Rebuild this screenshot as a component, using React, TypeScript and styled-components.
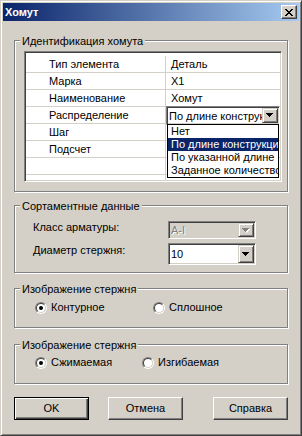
import React from 'react';
import styled, { createGlobalStyle } from 'styled-components';

const Global = createGlobalStyle`
  html, body { margin: 0; padding: 0; background: #D4D0C8; }
  body { font-family: "Liberation Sans", Arial, sans-serif; font-size: 11px; color: #000; }
  * { box-sizing: border-box; }
`;

const Window = styled.div`
  width: 302px;
  height: 436px;
  background: #D4D0C8;
  border: 1px solid;
  border-color: #D4D0C8 #404040 #404040 #D4D0C8;
  box-shadow: inset 1px 1px 0 #fff, inset -1px -1px 0 #808080;
  padding: 2px;
  display: flex;
  flex-direction: column;
`;

const TitleBar = styled.div`
  height: 18px;
  flex: none;
  display: flex;
  align-items: center;
  justify-content: space-between;
  padding: 0 2px;
  background: linear-gradient(to right, #0A246A, #A6CAF0);
`;

const Title = styled.span`
  color: #fff;
  font-weight: bold;
  font-size: 11px;
  line-height: 13px;
`;

const CloseBtn = styled.div`
  width: 16px;
  height: 14px;
  background: #D4D0C8;
  border: 1px solid;
  border-color: #fff #404040 #404040 #fff;
  box-shadow: inset -1px -1px 0 #808080;
  display: flex;
  align-items: center;
  justify-content: center;
  padding-right: 1px;
`;

const Body = styled.div`
  display: flex;
  flex-direction: column;
  padding: 0 11px;
`;

const Group = styled.div<{ $h: number; $mt: number }>`
  position: relative;
  flex: none;
  margin-top: ${p => p.$mt}px;
  height: ${p => p.$h}px;
  border: 1px solid #808080;
  box-shadow: 1px 1px 0 #fff, inset 1px 1px 0 #fff;
`;

const Legend = styled.span`
  position: absolute;
  top: -6px;
  left: 5px;
  padding: 0 2px;
  background: #D4D0C8;
  line-height: 13px;
  white-space: nowrap;
`;

const TableWrap = styled.div`
  padding: 10px 0 0 9px;
`;

const Table = styled.div`
  width: 258px;
  height: 131px;
  background: #fff;
  border: 1px solid;
  border-color: #808080 #fff #fff #808080;
  box-shadow: inset 1px 1px 0 #404040, inset -1px -1px 0 #D4D0C8;
  padding: 4px 1px 0 1px;
  overflow: hidden;
`;

const Row = styled.div`
  display: grid;
  grid-template-columns: 140px 1fr;
  height: 17px;
  border-bottom: 1px solid #D4D0C8;
`;

const KeyCell = styled.div`
  border-right: 1px solid #D4D0C8;
  padding-left: 23px;
  line-height: 16px;
  white-space: nowrap;
`;

const ValCell = styled.div`
  position: relative;
  padding-left: 5px;
  line-height: 16px;
  white-space: nowrap;
`;

const Combo = styled.div<{ $h: number; $w: number; $disabled?: boolean }>`
  width: ${p => p.$w}px;
  height: ${p => p.$h}px;
  display: flex;
  border: 1px solid;
  border-color: #808080 #fff #fff #808080;
  box-shadow: inset 1px 1px 0 #404040, inset -1px -1px 0 #D4D0C8;
  padding: 1px;
  background: ${p => (p.$disabled ? '#D4D0C8' : '#fff')};
`;

const InlineCombo = styled(Combo)`
  position: absolute;
  top: -1px;
  left: 0;
`;

const ComboText = styled.div<{ $disabled?: boolean }>`
  flex: 1;
  min-width: 0;
  overflow: hidden;
  white-space: nowrap;
  display: flex;
  align-items: center;
  padding-left: 1px;
  color: ${p => (p.$disabled ? '#808080' : '#000')};
  text-shadow: ${p => (p.$disabled ? '1px 1px 0 #fff' : 'none')};
`;

const ArrowBtn = styled.div`
  width: 16px;
  flex: none;
  background: #D4D0C8;
  border: 1px solid;
  border-color: #D4D0C8 #404040 #404040 #D4D0C8;
  box-shadow: inset 1px 1px 0 #fff, inset -1px -1px 0 #808080;
  display: flex;
  align-items: center;
  justify-content: center;
`;

const DropList = styled.div`
  position: absolute;
  top: 100%;
  left: 0;
  right: 0;
  background: #fff;
  border: 1px solid #000;
`;

const DropItem = styled.div<{ $sel?: boolean }>`
  height: 13px;
  line-height: 13px;
  padding-left: 3px;
  white-space: nowrap;
  overflow: hidden;
  background: ${p => (p.$sel ? '#0A246A' : 'transparent')};
  color: ${p => (p.$sel ? '#fff' : '#000')};
`;

const FieldGrid = styled.div`
  display: grid;
  grid-template-columns: 135px 88px;
  row-gap: 4px;
  align-items: start;
  padding: 15px 0 0 18px;
`;

const FieldLabel = styled.div<{ $dy?: number }>`
  line-height: 13px;
  padding-top: ${p => p.$dy ?? 0}px;
  white-space: nowrap;
`;

const RadioRow = styled.div<{ $col: number; $pt: number }>`
  display: grid;
  grid-template-columns: ${p => p.$col}px auto;
  padding: ${p => p.$pt}px 0 0 20px;
`;

const RadioItem = styled.div`
  display: flex;
  align-items: center;
  gap: 4px;
  line-height: 13px;
  white-space: nowrap;
`;

const RadioOuter = styled.div`
  width: 12px;
  height: 12px;
  border-radius: 50%;
  border: 1px solid;
  border-color: #808080 #fff #fff #808080;
  flex: none;
`;

const RadioInner = styled.div`
  width: 10px;
  height: 10px;
  border-radius: 50%;
  border: 1px solid;
  border-color: #404040 #D4D0C8 #D4D0C8 #404040;
  background: #fff;
  display: flex;
  align-items: center;
  justify-content: center;
`;

const Dot = styled.div`
  width: 4px;
  height: 4px;
  border-radius: 50%;
  background: #000;
`;

const Buttons = styled.div`
  display: flex;
  margin-top: 13px;
  height: 23px;
`;

const Button = styled.div<{ $default?: boolean; $ml?: string }>`
  width: 75px;
  height: 23px;
  margin-left: ${p => p.$ml ?? '0'};
  display: flex;
  align-items: center;
  justify-content: center;
  background: #D4D0C8;
  border: 1px solid;
  border-color: ${p => (p.$default ? '#000' : '#fff #404040 #404040 #fff')};
  box-shadow: ${p =>
    p.$default
      ? 'inset 1px 1px 0 #fff, inset -1px -1px 0 #404040, inset -2px -2px 0 #808080'
      : 'inset -1px -1px 0 #808080'};
  line-height: 13px;
`;

const CloseGlyph = () => {
  const r: [number, number, number][] = [
    [0, 0, 2], [6, 0, 2], [1, 1, 2], [5, 1, 2], [2, 2, 4], [3, 3, 2],
    [2, 4, 4], [1, 5, 2], [5, 5, 2], [0, 6, 2], [6, 6, 2],
  ];
  return (
    <svg width="8" height="7" viewBox="0 0 8 7" shapeRendering="crispEdges">
      {r.map(([x, y, w], i) => (
        <rect key={i} x={x} y={y} width={w} height={1} fill="#000" />
      ))}
    </svg>
  );
};

const Arrow = ({ disabled }: { disabled?: boolean }) => {
  const r: [number, number, number][] = [[0, 0, 7], [1, 1, 5], [2, 2, 3], [3, 3, 1]];
  return (
    <svg width="8" height="5" viewBox="0 0 8 5" shapeRendering="crispEdges">
      {disabled &&
        r.map(([x, y, w], i) => (
          <rect key={'s' + i} x={x + 1} y={y + 1} width={w} height={1} fill="#fff" />
        ))}
      {r.map(([x, y, w], i) => (
        <rect key={i} x={x} y={y} width={w} height={1} fill={disabled ? '#808080' : '#000'} />
      ))}
    </svg>
  );
};

const Radio = ({ checked, label }: { checked?: boolean; label: string }) => (
  <RadioItem>
    <RadioOuter>
      <RadioInner>{checked && <Dot />}</RadioInner>
    </RadioOuter>
    <span>{label}</span>
  </RadioItem>
);

const rows: [string, string][] = [
  ['Тип элемента', 'Деталь'],
  ['Марка', 'X1'],
  ['Наименование', 'Хомут'],
  ['Распределение', ''],
  ['Шаг', ''],
  ['Подсчет', ''],
  ['', ''],
  ['', ''],
];

export default function App() {
  return (
    <>
      <Global />
      <Window>
        <TitleBar>
          <Title>Хомут</Title>
          <CloseBtn>
            <CloseGlyph />
          </CloseBtn>
        </TitleBar>
        <Body>
          <Group $mt={19} $h={152}>
            <Legend>Идентификация хомута</Legend>
            <TableWrap>
              <Table>
                {rows.map(([k, v], i) => (
                  <Row key={i}>
                    <KeyCell>{k}</KeyCell>
                    <ValCell>
                      {v}
                      {i === 3 && (
                        <InlineCombo $w={114} $h={19}>
                          <ComboText>По длине конструкции</ComboText>
                          <ArrowBtn>
                            <Arrow />
                          </ArrowBtn>
                          <DropList>
                            <DropItem>Нет</DropItem>
                            <DropItem $sel>По длине конструкции</DropItem>
                            <DropItem>По указанной длине</DropItem>
                            <DropItem>Заданное количество</DropItem>
                          </DropList>
                        </InlineCombo>
                      )}
                    </ValCell>
                  </Row>
                ))}
              </Table>
            </TableWrap>
          </Group>

          <Group $mt={13} $h={68}>
            <Legend>Сортаментные данные</Legend>
            <FieldGrid>
              <FieldLabel>Класс арматуры:</FieldLabel>
              <Combo $w={88} $h={18} $disabled>
                <ComboText $disabled>A-I</ComboText>
                <ArrowBtn>
                  <Arrow disabled />
                </ArrowBtn>
              </Combo>
              <FieldLabel $dy={1}>Диаметр стержня:</FieldLabel>
              <Combo $w={88} $h={22}>
                <ComboText>10</ComboText>
                <ArrowBtn>
                  <Arrow />
                </ArrowBtn>
              </Combo>
            </FieldGrid>
          </Group>

          <Group $mt={15} $h={40}>
            <Legend>Изображение стержня</Legend>
            <RadioRow $col={118} $pt={12}>
              <Radio checked label="Контурное" />
              <Radio label="Сплошное" />
            </RadioRow>
          </Group>

          <Group $mt={16} $h={40}>
            <Legend>Изображение стержня</Legend>
            <RadioRow $col={107} $pt={11}>
              <Radio checked label="Сжимаемая" />
              <Radio label="Изгибаемая" />
            </RadioRow>
          </Group>

          <Buttons>
            <Button $default>OK</Button>
            <Button $ml="19px">Отмена</Button>
            <Button $ml="auto">Справка</Button>
          </Buttons>
        </Body>
      </Window>
    </>
  );
}
